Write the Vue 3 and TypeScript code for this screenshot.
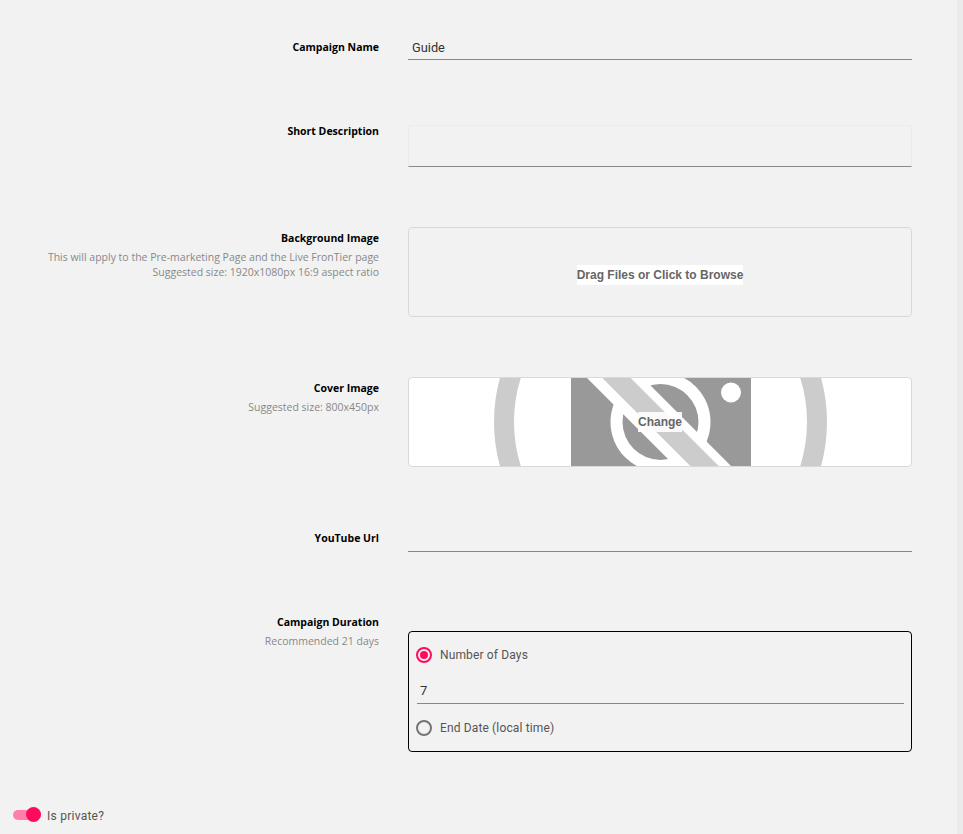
<script setup lang="ts">
</script>

<template>
  <div class="page">
    <main class="main">
      <section class="form">
        <div class="row">
          <div class="label"><strong>Campaign Name</strong></div>
          <div class="field input name-input">Guide</div>
        </div>

        <div class="row">
          <div class="label"><strong>Short Description</strong></div>
          <div class="field textarea"></div>
        </div>

        <div class="row">
          <div class="label">
            <strong>Background Image</strong>
            <span>This will apply to the Pre-marketing Page and the Live FronTier page</span>
            <span>Suggested size: 1920x1080px 16:9 aspect ratio</span>
          </div>
          <div class="field drop"><span class="drop-text">Drag Files or Click to Browse</span></div>
        </div>

        <div class="row">
          <div class="label">
            <strong>Cover Image</strong>
            <span>Suggested size: 800x450px</span>
          </div>
          <div class="field drop cover">
            <svg class="placeholder" width="502" height="88" viewBox="409 378 502 88" aria-hidden="true">
              <circle cx="660.5" cy="422" r="156.5" fill="none" stroke="#cccccc" stroke-width="20" />
              <rect x="571" y="378" width="180" height="88" fill="#999999" />
              <circle cx="660.5" cy="422" r="50" fill="#ffffff" />
              <circle cx="660.5" cy="422" r="38" fill="#999999" />
              <polygon points="587,378 643,378 731,466 675,466" fill="#ffffff" />
              <polygon points="602.3,378 630.7,378 718.7,466 690.3,466" fill="#cccccc" />
              <circle cx="731" cy="392.5" r="10" fill="#ffffff" />
            </svg>
            <span class="drop-text change">Change</span>
          </div>
        </div>

        <div class="row">
          <div class="label"><strong>YouTube Url</strong></div>
          <div class="field input yt-input"></div>
        </div>

        <div class="row">
          <div class="label flush">
            <strong>Campaign Duration</strong>
            <span>Recommended 21 days</span>
          </div>
          <div class="field duration">
            <div class="option">
              <span class="radio on"></span>
              <span>Number of Days</span>
            </div>
            <div class="days">7</div>
            <div class="option second">
              <span class="radio"></span>
              <span>End Date (local time)</span>
            </div>
          </div>
        </div>
      </section>

      <div class="toggle-row">
        <span class="toggle"><span class="thumb"></span></span>
        <span class="toggle-text">Is private?</span>
      </div>
    </main>
    <div class="scrollbar"></div>
  </div>
</template>

<style>
html,
body {
  margin: 0;
  background: #f2f2f2;
  overflow: hidden;
}
</style>

<style scoped>
.page {
  display: flex;
  height: 834px;
  background: #f2f2f2;
  overflow: hidden;
}

.main {
  flex: 1;
  padding-top: 36px;
  box-sizing: border-box;
}

.scrollbar {
  width: 6px;
  background: #ebebeb;
}

.form {
  display: flex;
  flex-direction: column;
  gap: 60px;
}

.row {
  display: flex;
  align-items: flex-start;
  gap: 29px;
}

.label {
  width: 379px;
  flex: none;
  padding-top: 1px;
  text-align: right;
  font-family: "Open Sans", sans-serif;
  font-size: 10.5px;
  line-height: 15px;
  color: #888888;
  box-sizing: border-box;
}

.label.flush {
  padding-top: 0;
}

.label strong {
  display: block;
  height: 22px;
  line-height: 20px;
  font-weight: 700;
  color: #000000;
}

.label span {
  display: block;
}

.field {
  width: 504px;
  flex: none;
  box-sizing: border-box;
  font-family: Roboto, sans-serif;
  font-size: 13px;
  color: #333333;
}

.input {
  border-bottom: 1px solid #888888;
  padding-left: 4px;
  line-height: 23px;
}

.name-input {
  height: 24px;
  font-size: 12.8px;
}

.yt-input {
  height: 25px;
}

.textarea {
  height: 42px;
  margin-top: 5px;
  border: 1px solid #ebebeb;
  border-bottom: 1px solid #888888;
}

.drop {
  position: relative;
  display: flex;
  align-items: center;
  justify-content: center;
  height: 90px;
  border: 1px solid #d9d9d9;
  border-radius: 4px;
}

.cover {
  background: #ffffff;
  overflow: hidden;
}

.placeholder {
  position: absolute;
  left: 0;
  top: 0;
  display: block;
}

.drop-text {
  position: relative;
  top: 3px;
  background: #ffffff;
  font-family: "Liberation Sans", sans-serif;
  font-size: 12px;
  font-weight: 700;
  line-height: 20px;
  color: #666666;
}

.change {
  top: 0;
  background: rgba(255, 255, 255, 0.9);
}

.duration {
  height: 121px;
  margin-top: 19px;
  padding: 0 7px;
  border: 1px solid #000000;
  border-radius: 4px;
  font-size: 12px;
  letter-spacing: 0.14px;
  color: #555555;
}

.option {
  display: flex;
  align-items: center;
  gap: 8px;
  height: 20px;
  margin-top: 13px;
}

.option.second {
  margin-top: 14px;
}

.radio {
  position: relative;
  width: 16px;
  height: 16px;
  box-sizing: border-box;
  border: 2px solid #757575;
  border-radius: 50%;
}

.radio.on {
  border-color: #ff0a5f;
}

.radio.on::after {
  content: "";
  position: absolute;
  left: 2px;
  top: 2px;
  width: 8px;
  height: 8px;
  border-radius: 50%;
  background: #ff0a5f;
}

.days {
  height: 26px;
  margin-top: 12px;
  margin-left: 1px;
  padding-left: 3px;
  border-bottom: 1px solid #888888;
  font-size: 13px;
  line-height: 28px;
  color: #333333;
}

.toggle-row {
  display: flex;
  align-items: center;
  gap: 6px;
  height: 20px;
  margin-top: 53px;
  padding-left: 13px;
  font-family: Roboto, sans-serif;
  font-size: 12px;
  color: #555555;
}

.toggle-text {
  position: relative;
  top: 1px;
  letter-spacing: 0.25px;
}

.toggle {
  position: relative;
  width: 28px;
  height: 10px;
  border-radius: 5px;
  background: #ff80ab;
}

.thumb {
  position: absolute;
  right: 0;
  top: -3px;
  width: 15px;
  height: 15px;
  border-radius: 50%;
  background: #ff0a5f;
}
</style>
